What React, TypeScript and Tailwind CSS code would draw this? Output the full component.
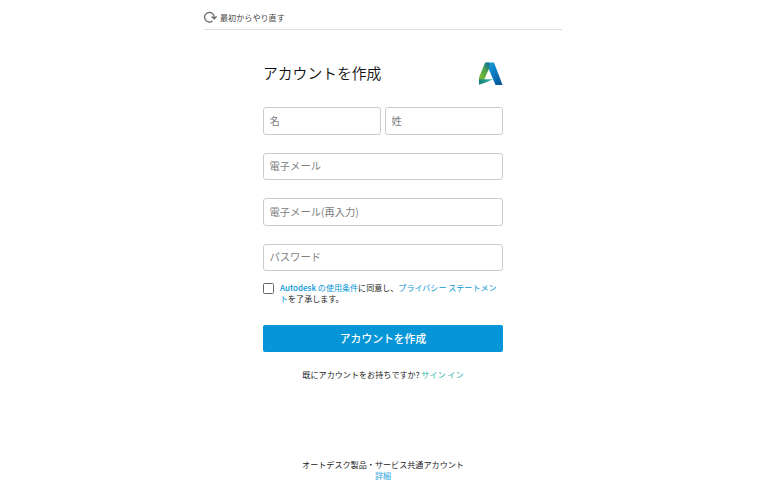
import React from 'react';

function RestartIcon() {
  return (
    <svg className="h-[12px] w-[13px] shrink-0" viewBox="0 0 13 12" fill="none" stroke="#666" strokeWidth="1.3">
      <path d="M8.4 10A4.8 4.8 0 1 1 10.2 5.8v1.4" />
      <path d="M7.6 5.4l2.6 2.4 2.4-2.4" />
    </svg>
  );
}

function AutodeskLogo() {
  return (
    <svg className="h-[24px] w-[25px]" viewBox="0 0 25 24">
      <defs>
        <linearGradient id="left" x1="0.7" y1="0" x2="0.2" y2="1">
          <stop offset="0" stopColor="#17758f" />
          <stop offset="0.35" stopColor="#4fa548" />
          <stop offset="1" stopColor="#8bc02a" />
        </linearGradient>
        <linearGradient id="right" x1="0" y1="0" x2="1" y2="1">
          <stop offset="0" stopColor="#1fa5dc" />
          <stop offset="0.4" stopColor="#0b80c6" />
          <stop offset="1" stopColor="#064f91" />
        </linearGradient>
        <linearGradient id="base" x1="0" y1="0" x2="1" y2="0">
          <stop offset="0" stopColor="#137f78" />
          <stop offset="1" stopColor="#3cc0a8" />
        </linearGradient>
      </defs>
      <path d="M9 0.6h7L24.5 23h-7L10.5 6.6z" fill="url(#right)" />
      <path d="M7.2 0.6h3.9l0.4 5L6.2 17.5 1 22.5V15.6z" fill="url(#left)" />
      <path d="M1 17.2h14.2L7.8 20.6 1 22.8z" fill="url(#base)" />
    </svg>
  );
}

function Field({ label, type = 'text' }: { label: string; type?: string }) {
  return (
    <input
      type={type}
      placeholder={label}
      className="block h-[27.5px] w-full min-w-0 rounded-[3px] border border-[#ccc] bg-white px-[5.5px] pb-px text-[10.3px] text-[#333] placeholder:text-[#808080]"
    />
  );
}

export default function App() {
  return (
    <div className="h-[500px] bg-white pr-[2px] font-['Noto_Sans_CJK_JP','Noto_Sans',sans-serif] text-[#222]">
      <div className="mx-auto w-[358px] pt-[11px]">
        <header className="flex h-[19px] items-start gap-[3px] border-b border-[#ddd] text-[8.1px] leading-[13px] text-[#444]">
          <RestartIcon />
          <span>最初からやり直す</span>
        </header>
      </div>

      <main className="mx-auto w-[240px] pt-[32px]">
        <div className="flex h-[24px] items-center justify-between">
          <h1 className="pb-[2px] text-[14.8px] leading-[22px] font-[350] text-[#111]">アカウントを作成</h1>
          <AutodeskLogo />
        </div>

        <form className="mt-[21px]">
          <div className="flex flex-col gap-[18px]">
            <div className="flex gap-[4px]">
              <Field label="名" />
              <Field label="姓" />
            </div>
            <Field label="電子メール" />
            <Field label="電子メール(再入力)" />
            <Field label="パスワード" type="password" />
          </div>

          <label className="mt-[11px] flex text-[8.05px] leading-[11px]">
            <input
              type="checkbox"
              className="mt-px mr-[6px] h-[11px] w-[11px] shrink-0 appearance-none rounded-[1.5px] border border-[#666]"
            />
            <span className="whitespace-nowrap">
              <a className="text-[#0696d7]"><b className="font-medium">Autodesk</b> の使用条件</a>に同意し、
              <a className="text-[#0696d7]">プライバシー ステートメン<br />ト</a>を了承します。
            </span>
          </label>

          <button type="button" className="mt-[21px] block h-[27px] w-full rounded-[2px] bg-[#0696d7] text-[10.8px] font-medium text-white">
            アカウントを作成
          </button>
        </form>

        <p className="mt-[17px] text-center text-[8.1px] leading-[11px] whitespace-nowrap">
          既にアカウントをお持ちですか? <a className="text-[#1fb5a5]">サイン イン</a>
        </p>

        <footer className="mt-[79px] text-center text-[8.1px] leading-[11px]">
          <p>オートデスク製品・サービス共通アカウント</p>
          <a className="block text-[#2ba5de]">詳細</a>
        </footer>
      </main>
    </div>
  );
}
